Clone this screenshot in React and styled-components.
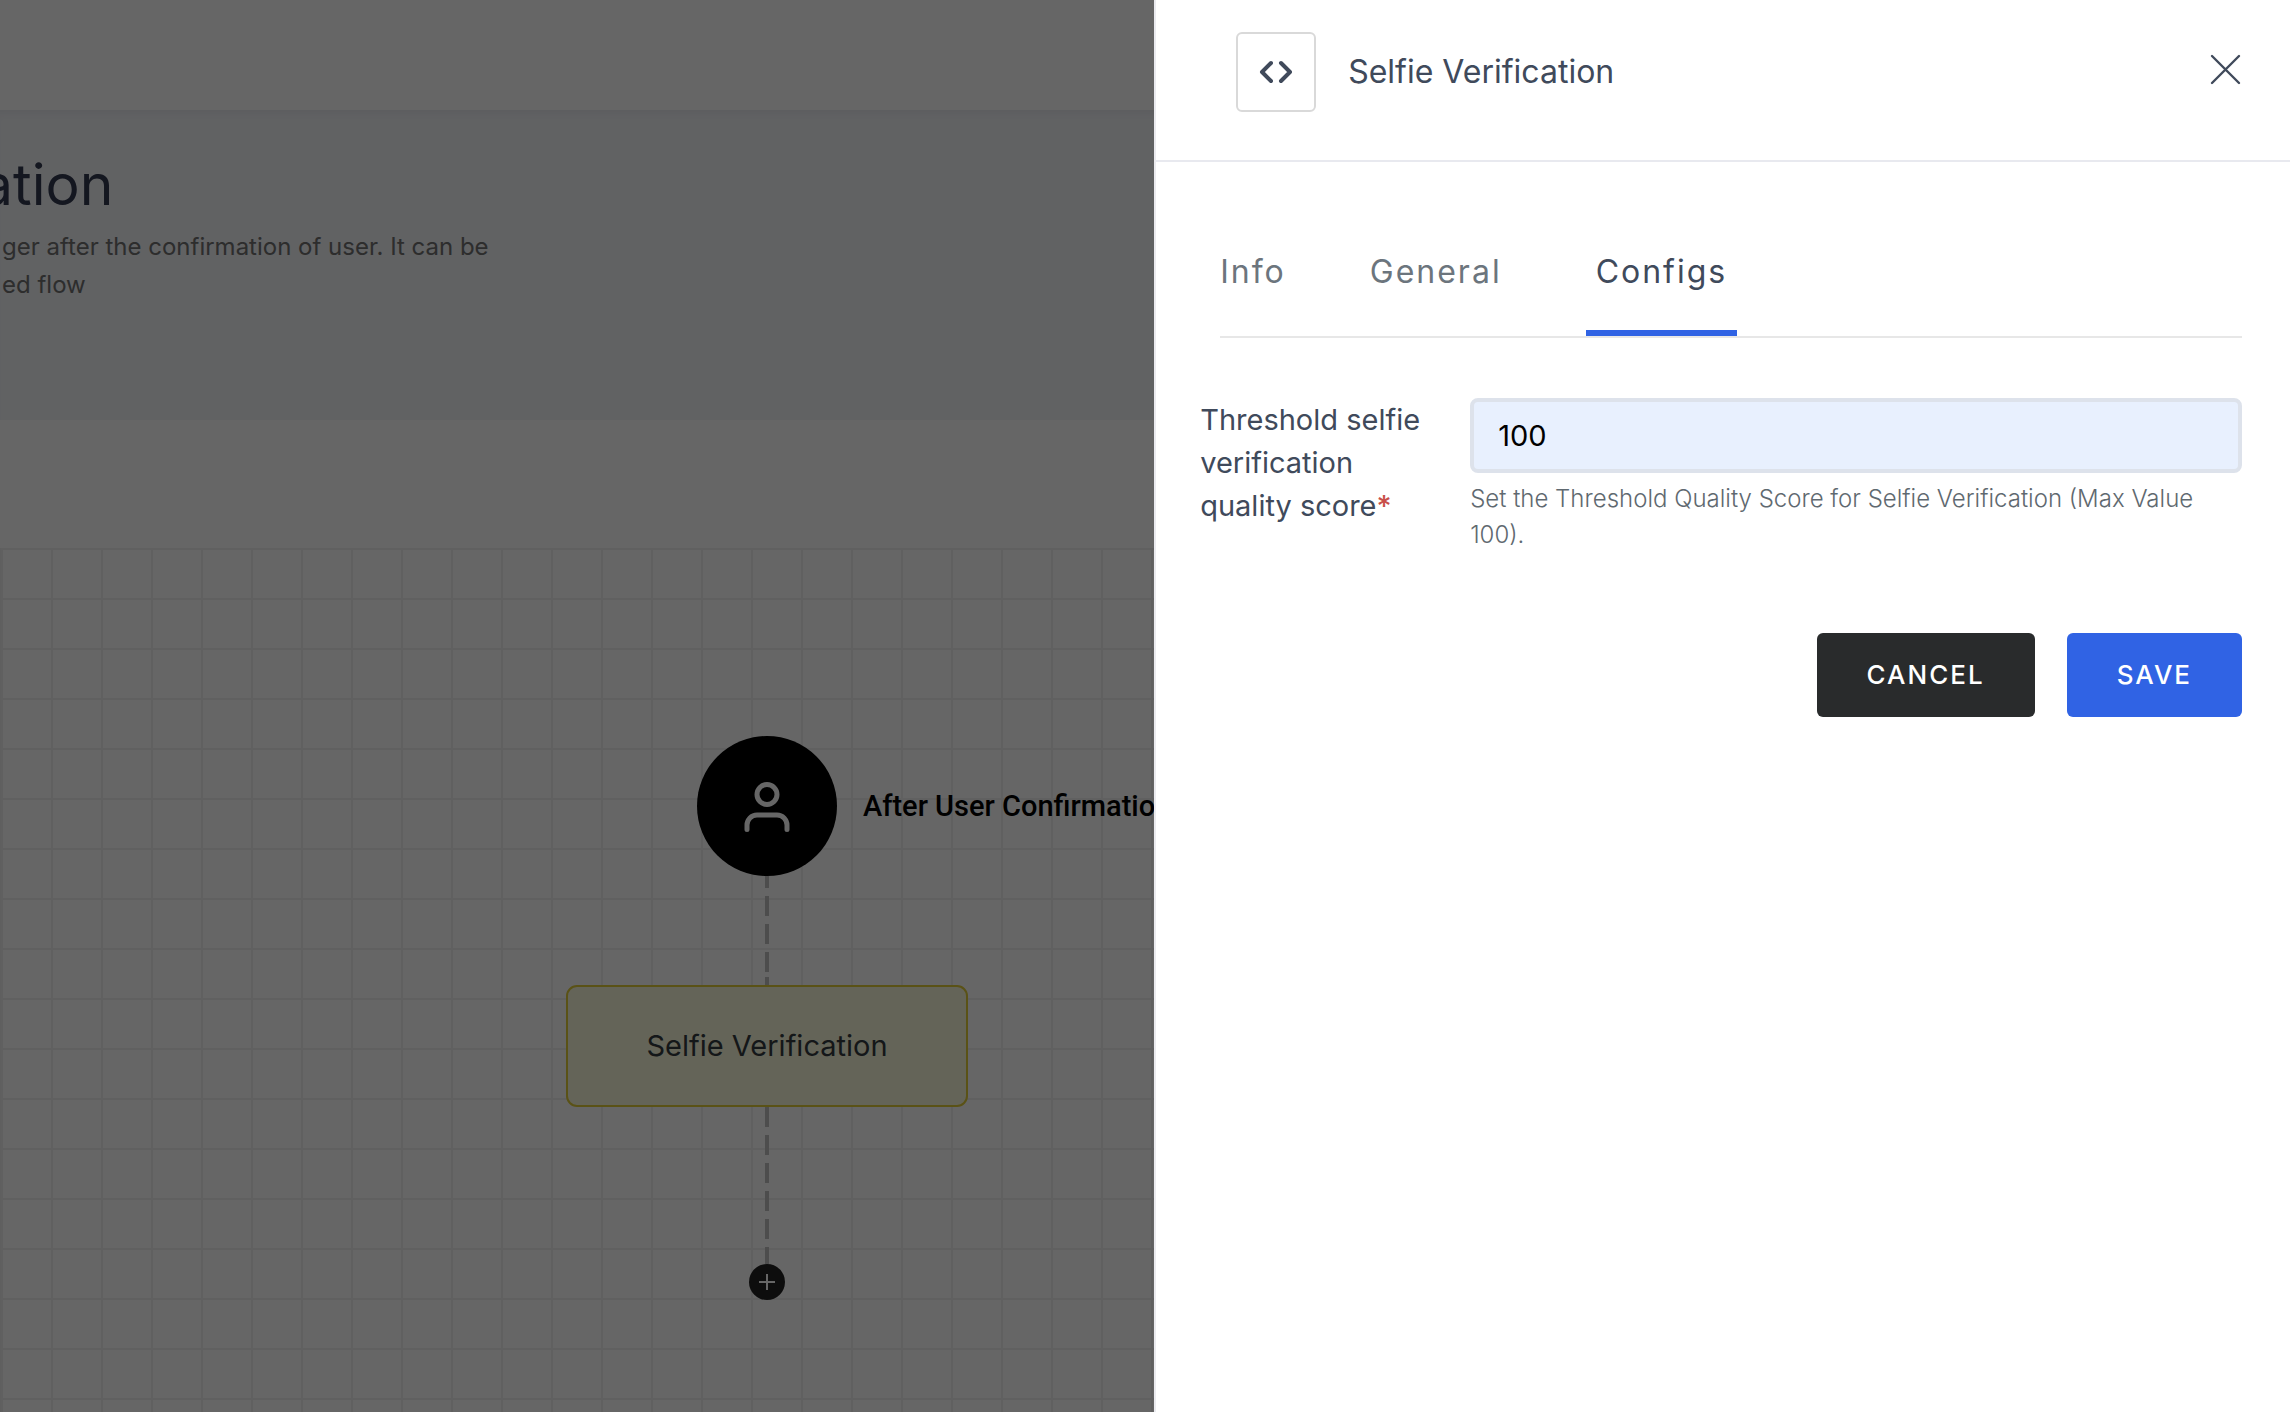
import React, { useState } from "react";
import styled, { createGlobalStyle } from "styled-components";

const GlobalStyle = createGlobalStyle`
  *, *::before, *::after { box-sizing: border-box; }
  body {
    margin: 0;
    overflow: hidden;
    background: #fff;
    color: #404a5b;
    font-family: Inter, "Liberation Sans", sans-serif;
    font-size: 29px;
  }
  h1, h2, p { margin: 0; font-weight: 400; }
  button, input { font-family: inherit; }
`;

const Page = styled.main`
  display: flex;
  flex-direction: column;
  height: 100vh;
  overflow: hidden;
`;

const TopBar = styled.header`
  height: 110px;
  flex: none;
`;

const Intro = styled.section`
  flex: none;
  height: 310px;
  padding-top: 40px;
  background: #f2f4f8;
  box-shadow: inset 0 8px 8px -6px rgba(60, 70, 90, 0.08);
`;

const IntroTitle = styled.h1`
  margin-left: -19px;
  font-size: 57px;
  line-height: 70px;
  color: #343a50;
`;

const IntroText = styled.p`
  padding: 8px 0 0 2px;
  font-size: 24px;
  line-height: 38px;
  color: #707070;
  white-space: pre-line;
`;

const Canvas = styled.section`
  flex: 1;
  margin-top: 128px;
  padding: 188px 0 0 565px;
  border-left: 1px solid #eee;
  background-image:
    linear-gradient(#f0f0f0 2px, transparent 2px),
    linear-gradient(90deg, #f0f0f0 2px, transparent 2px);
  background-size: 50px 50px;
`;

const Flow = styled.div`
  display: flex;
  flex-direction: column;
  align-items: center;
  width: 402px;
`;

const StartNode = styled.div`
  position: relative;
  display: grid;
  place-items: center;
  width: 140px;
  height: 140px;
  border-radius: 50%;
  background: #000;
`;

const StartLabel = styled.span`
  position: absolute;
  left: 166px;
  font-family: Roboto, "Liberation Sans", sans-serif;
  font-size: 29px;
  font-weight: 500;
  color: #000;
  white-space: nowrap;
`;

const Connector = styled.div`
  width: 4px;
  height: ${(p) => p.$length}px;
  background: repeating-linear-gradient(#c0c0c0 0 20px, transparent 20px 28px);
  background-position-y: ${(p) => p.$shift || 0}px;
`;

const StepNode = styled.div`
  display: grid;
  place-items: center;
  width: 100%;
  height: 122px;
  padding-bottom: 2px;
  border: 2px solid #e0cc38;
  border-radius: 11px;
  background: #fbfadc;
  font-size: 29px;
  color: #343a40;
`;

const AddButton = styled.button`
  display: grid;
  place-items: center;
  width: 36px;
  height: 36px;
  padding: 0;
  border: 0;
  border-radius: 50%;
  background: #212121;
`;

const Backdrop = styled.div`
  position: fixed;
  inset: 0;
  background: rgba(0, 0, 0, 0.6);
`;

const Drawer = styled.aside`
  position: fixed;
  inset: 0 0 0 auto;
  width: 49.6%;
  border-left: 2px solid #ebebef;
  background: #fff;
`;

const DrawerHeader = styled.header`
  display: flex;
  align-items: flex-start;
  gap: 32px;
  padding: 32px 48px 48px 80px;
  border-bottom: 2px solid #e8e9ef;
`;

const IconBox = styled.div`
  display: grid;
  place-items: center;
  width: 80px;
  height: 80px;
  border: 2px solid #d9d9d9;
  border-radius: 6px;
`;

const DrawerTitle = styled.h2`
  flex: 1;
  font-size: 32px;
  line-height: 80px;
`;

const CloseButton = styled.button`
  display: grid;
  margin-top: 22px;
  padding: 0;
  border: 0;
  background: none;
  color: inherit;
`;

const Tabs = styled.div`
  display: flex;
  gap: 74px;
  margin: 66px 48px 0 64px;
  border-bottom: 2px solid #e7e7e7;
`;

const Tab = styled.button`
  height: 108px;
  padding: 0 ${(p) => (p.$inset ? 10 : 0)}px 16px;
  border: 0;
  border-bottom: 6px solid ${(p) => (p.$active ? "#3063e4" : "transparent")};
  background: none;
  font-size: 32px;
  letter-spacing: 2px;
  color: ${(p) => (p.$active ? "#404a5b" : "#6c757d")};
`;

const Form = styled.form`
  padding: 60px 48px 0 44px;
`;

const Field = styled.div`
  display: grid;
  grid-template-columns: 222px 1fr;
  gap: 48px;
`;

const Label = styled.label`
  line-height: 43px;
`;

const Required = styled.span`
  font-weight: 500;
  color: #c9504a;
`;

const Input = styled.input`
  display: block;
  width: 100%;
  height: 75px;
  padding: 0 24px;
  border: 4px solid #dde2eb;
  border-radius: 8px;
  background: #e8f0fe;
  font-size: 29px;
  color: #000;
  outline: 0;
`;

const Hint = styled.p`
  padding-top: 8px;
  font-size: 24px;
  font-weight: 300;
  line-height: 36px;
  color: #5f6970;
`;

const Actions = styled.div`
  display: flex;
  justify-content: flex-end;
  gap: 32px;
  padding-top: 80px;
`;

const Button = styled.button`
  height: 84px;
  padding: 0 50px 2px;
  border: 0;
  border-radius: 6px;
  background: ${(p) => (p.$primary ? "#3063e4" : "#292b2c")};
  color: #fff;
  font-size: 26px;
  font-weight: 500;
  letter-spacing: 2px;
`;

const TABS = ["Info", "General", "Configs"];

export default function App() {
  const [tab, setTab] = useState("Configs");
  const [score, setScore] = useState("100");

  return (
    <>
      <GlobalStyle />
      <Page>
        <TopBar />
        <Intro>
          <IntroTitle>ation</IntroTitle>
          <IntroText>
            {"ger after the confirmation of user. It can be\ned flow"}
          </IntroText>
        </Intro>
        <Canvas>
          <Flow>
            <StartNode>
              <svg width="46" height="52" viewBox="0 -2 46 52" fill="none" stroke="#fff" strokeWidth="5" strokeLinecap="round">
                <circle cx="23" cy="12.5" r="10" />
                <path d="M3 47.500V43a10 10 0 0 1 10-10h20a10 10 0 0 1 10 10v4.500" />
              </svg>
              <StartLabel>After User Confirmation</StartLabel>
            </StartNode>
            <Connector $length={109} $shift={-8} />
            <StepNode>Selfie Verification</StepNode>
            <Connector $length={157} />
            <AddButton aria-label="Add step">
              <svg width="16" height="16" viewBox="0 0 16 16" stroke="#fff" strokeWidth="2">
                <path d="M8 0v16M0 8h16" />
              </svg>
            </AddButton>
          </Flow>
        </Canvas>
      </Page>
      <Backdrop />
      <Drawer>
        <DrawerHeader>
          <IconBox>
            <svg width="34" height="24" viewBox="0 0 34 24" fill="none" stroke="currentColor" strokeWidth="4" strokeLinecap="round" strokeLinejoin="round">
              <path d="M12 3L3 12l9 9M22 3l9 9-9 9" />
            </svg>
          </IconBox>
          <DrawerTitle>Selfie Verification</DrawerTitle>
          <CloseButton aria-label="Close">
            <svg width="32" height="32" viewBox="0 0 32 32" stroke="currentColor" strokeWidth="2.400" strokeLinecap="round">
              <path d="M2 2l27 27M29 2l-27 27" />
            </svg>
          </CloseButton>
        </DrawerHeader>
        <Tabs role="tablist">
          {TABS.map((name) => (
            <Tab
              key={name}
              role="tab"
              aria-selected={tab === name}
              $active={tab === name}
              $inset={name !== "Info"}
              onClick={() => setTab(name)}
            >
              {name}
            </Tab>
          ))}
        </Tabs>
        <Form onSubmit={(e) => e.preventDefault()}>
          <Field>
            <Label htmlFor="score">
              Threshold selfie verification quality score<Required>*</Required>
            </Label>
            <div>
              <Input id="score" value={score} onChange={(e) => setScore(e.target.value)} />
              <Hint>
                Set the Threshold Quality Score for Selfie Verification (Max Value 100).
              </Hint>
            </div>
          </Field>
          <Actions>
            <Button type="button">CANCEL</Button>
            <Button type="submit" $primary>SAVE</Button>
          </Actions>
        </Form>
      </Drawer>
    </>
  );
}
